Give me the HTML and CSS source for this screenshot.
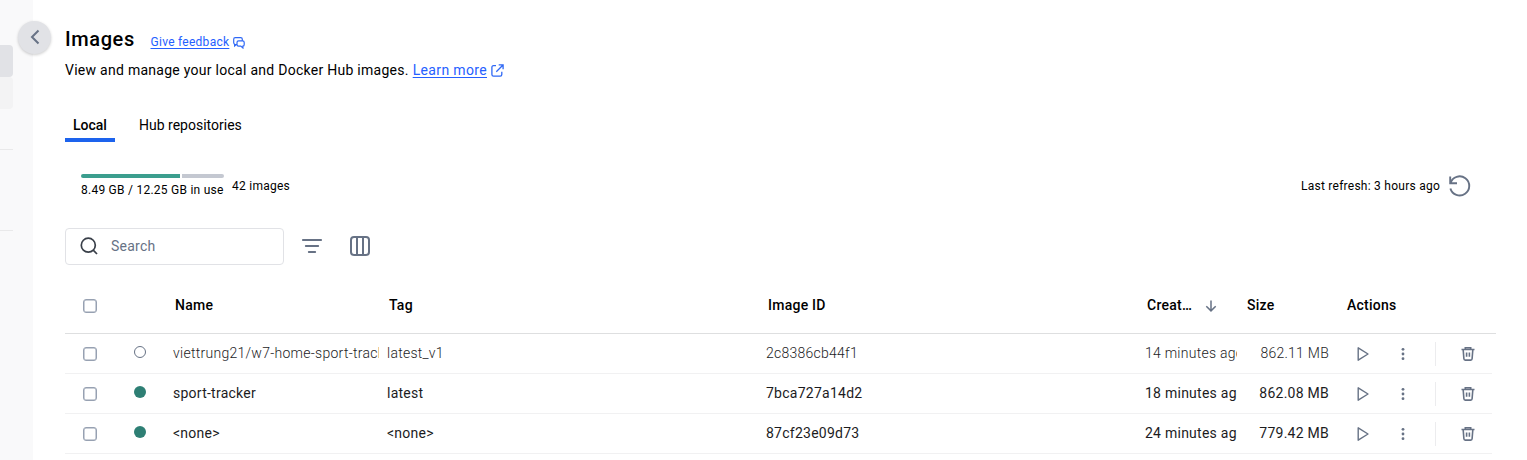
FILE: index.html
```html
<!DOCTYPE html>
<html lang="en">
<head>
<meta charset="utf-8">
<title>Images</title>
<link rel="stylesheet" href="styles.css">
</head>
<body>
<svg class="defs" width="0" height="0">
  <symbol id="play" viewBox="0 0 16 16"><path d="M3.200 1.800v12.400l9.800-6.200z" fill="none" stroke="currentColor" stroke-width="1.400" stroke-linejoin="round"/></symbol>
  <symbol id="dots" viewBox="0 0 16 16"><circle cx="8" cy="3.300" r="1.400"/><circle cx="8" cy="8" r="1.400"/><circle cx="8" cy="12.700" r="1.400"/></symbol>
  <symbol id="trash" viewBox="0 0 16 16"><path d="M1.500 3.500h13M5.300 3V1.800h5.400V3M3.200 4l.7 8.800q.1 1.300 1.300 1.300h5.600q1.200 0 1.300-1.300l.7-8.800M6.600 6.500v4.300M9.400 6.500v4.300" fill="none" stroke="currentColor" stroke-width="1.600"/></symbol>
</svg>
<div class="app">
  <aside class="sidebar">
    <div class="nav-item active"></div>
    <div class="nav-item hover"></div>
    <div class="nav-rule first"></div>
    <div class="nav-rule second"></div>
    <button class="collapse" aria-label="Collapse"><svg width="20" height="20" viewBox="0 0 20 20"><path d="M13.500 3.500 7 10l6.500 6.500" fill="none" stroke="currentColor" stroke-width="2"/></svg></button>
  </aside>
  <main class="main">
    <header class="title-row">
      <h1>Images</h1>
      <a class="feedback">Give feedback</a>
      <svg class="link-icon chat" width="12" height="12" viewBox="0 0 12 12"><path d="M3.500 7.500H2.300Q.7 7.300.7 5.800V2.300Q.7.700 2.300.7h5.400q1.600 0 1.600 1.600v1.200M1.600 7v2l2-1.600M5.600 3.900h4q1.600 0 1.600 1.600v1.900q0 1.600-1.300 1.700v1.900L7.800 9.100H5.600Q4 9.100 4 7.500v-2q0-1.600 1.600-1.600z" fill="none" stroke="currentColor" stroke-width="1.200"/></svg>
    </header>
    <p class="desc"><span>View and manage your local and Docker Hub images.</span><a>Learn more</a><svg class="link-icon" width="13" height="13" viewBox="0 0 13 13"><path d="M5 1.700H2.500Q.9 1.700.9 3.300v7.200q0 1.600 1.600 1.600h6.700q1.600 0 1.600-1.600V7.700M7.700.9h4.400v4.400M12 1 5.300 7.700" fill="none" stroke="currentColor" stroke-width="1.300"/></svg></p>
    <nav class="tabs"><div class="tab selected">Local</div><div class="tab">Hub repositories</div></nav>
    <section class="usage">
      <div class="disk">
        <div class="bar"><i class="used"></i><i class="free"></i></div>
        <div class="disk-text">8.49 GB / 12.25 GB in use</div>
      </div>
      <div class="count">42 images</div>
      <div class="refresh">Last refresh: 3 hours ago</div>
      <svg class="refresh-icon" width="24" height="24" viewBox="0 0 24 24"><path d="M2.200 2.500v6.700H9M2.500 9A9.600 9.600 0 1 1 2.400 14.500" fill="none" stroke="currentColor" stroke-width="1.900"/></svg>
    </section>
    <section class="toolbar">
      <div class="search"><svg width="18" height="18" viewBox="0 0 18 18"><circle cx="8.300" cy="8.200" r="7" fill="none" stroke="currentColor" stroke-width="1.700"/><path d="m13.200 13.200 3.800 3.800" stroke="currentColor" stroke-width="1.700"/></svg><span>Search</span></div>
      <svg class="tool filter" width="20" height="20" viewBox="0 0 20 20"><path d="M.8 4h18.400M3.800 10h12.400M6.800 16h6.400" fill="none" stroke="currentColor" stroke-width="1.900" stroke-linecap="round"/></svg>
      <svg class="tool" width="20" height="20" viewBox="0 0 20 20"><path d="M4 1h12q3 0 3 3v12q0 3-3 3H4q-3 0-3-3V4Q1 1 4 1zM7 1v18M13 1v18" fill="none" stroke="currentColor" stroke-width="2"/></svg>
    </section>
    <section class="table">
      <div class="row head">
        <div class="check"><i></i></div><div></div><div>Name</div><div>Tag</div><div>Image ID</div>
        <div class="created"><span>Creat…</span><svg width="12" height="12" viewBox="0 0 12 12"><path d="M6 .5v10.300M1.300 6.200 6 10.900l4.700-4.700" fill="none" stroke="currentColor" stroke-width="1.500"/></svg></div>
        <div>Size</div><div>Actions</div>
      </div>
      <div class="row body unused">
        <div class="check"><i></i></div><div class="status"><i></i></div><div>viettrung21/w7-home-sport-tracker</div><div>latest_v1</div><div>2c8386cb44f1</div><div>14 minutes ago</div><div class="size">862.11 MB</div>
        <div class="actions"><svg><use href="#play"/></svg><svg><use href="#dots"/></svg><b></b><svg><use href="#trash"/></svg></div>
      </div>
      <div class="row body">
        <div class="check"><i></i></div><div class="status"><i></i></div><div>sport-tracker</div><div>latest</div><div>7bca727a14d2</div><div>18 minutes ago</div><div class="size">862.08 MB</div>
        <div class="actions"><svg><use href="#play"/></svg><svg><use href="#dots"/></svg><b></b><svg><use href="#trash"/></svg></div>
      </div>
      <div class="row body">
        <div class="check"><i></i></div><div class="status"><i></i></div><div>&lt;none&gt;</div><div>&lt;none&gt;</div><div>87cf23e09d73</div><div>24 minutes ago</div><div class="size">779.42 MB</div>
        <div class="actions"><svg><use href="#play"/></svg><svg><use href="#dots"/></svg><b></b><svg><use href="#trash"/></svg></div>
      </div>
    </section>
  </main>
</div>
</body>
</html>
```

FILE: styles.css
```css
* { box-sizing: border-box; }
body { margin: 0; background: #fff; color: #000; font-family: Roboto, sans-serif; font-size: 14px; letter-spacing: 0.25px; overflow: hidden; }
.defs { position: absolute; }
.app { display: flex; height: 460px; }
.sidebar { position: relative; width: 33px; flex: none; background: #f9f9fa; padding-top: 45px; }
.nav-item { width: 13px; height: 32px; border-radius: 0 4px 4px 0; }
.nav-item.active { background: #e1e2e6; }
.nav-item.hover { background: #f3f3f4; }
.nav-rule { width: 13px; height: 1px; background: #e9e9ea; }
.nav-rule.first { margin-top: 40px; }
.nav-rule.second { margin-top: 80px; }
.collapse { position: absolute; left: 18px; top: 21px; width: 33px; height: 33px; padding: 0; border: 0; border-radius: 50%; background: #e1e2e6; color: #677285; display: grid; place-items: center; box-shadow: 0 1px 3px rgba(0,0,0,.2); }
.collapse svg { margin-top: -1px; }
.main { flex: 1; min-width: 0; padding: 24px 31px 0 32px; }
.title-row { display: flex; align-items: center; height: 30px; }
h1 { margin: 0; width: 85.500px; font-size: 20px; font-weight: 500; line-height: 30px; letter-spacing: 0.600px; }
a { color: #2560ff; text-decoration: underline; text-underline-offset: 2px; }
.feedback { font-size: 12px; margin-top: 6px; letter-spacing: 0.27px; }
.link-icon { color: #2f68f5; }
.chat { margin: 7px 0 0 4px; }
.desc { display: flex; align-items: center; margin: 6px 0 0; height: 20px; letter-spacing: 0.27px; }
.desc a { margin: 0 4px 0 4px; letter-spacing: 0.35px; }
.tabs { display: flex; margin-top: 28px; gap: 16px; }
.tab { height: 34px; padding: 8px 8px 0; line-height: 18px; letter-spacing: 0; }
.tab.selected { width: 50px; border-bottom: 4px solid #1d63ed; font-weight: 500; }
.usage { display: flex; align-items: center; height: 40px; margin-top: 24px; padding: 0 24px 0 16px; font-size: 12px; }
.disk { width: 143px; white-space: nowrap; }
.bar { display: flex; gap: 2px; height: 4px; }
.bar i { border-radius: 2px 0 0 2px; }
.used { width: 99px; background: #3b9e8e; }
.free { flex: 1; background: #c4c8d1; }
.bar .free { border-radius: 0 2px 2px 0; }
.disk-text { line-height: 16px; margin-top: 4px; }
.count { margin-left: 8px; }
.refresh { margin-left: auto; }
.refresh-icon { margin-left: 8px; color: #677285; }
.toolbar { display: flex; align-items: center; margin-top: 22px; height: 37px; color: #677285; }
.search { display: flex; align-items: center; width: 219px; height: 37px; padding: 0 0 2px 14px; gap: 13px; border: 1px solid #e1e2e6; border-radius: 4px; }
.search svg { color: #393f49; }
.tool { margin: 0 0 1px 28px; }
.tool.filter { margin-left: 18px; }
.table { margin-top: 12px; }
.row { display: grid; grid-template-columns: 50px 50px 214px 379px 379px 100px 100px 1fr; align-items: center; }
.row > div { padding-left: 8px; white-space: nowrap; overflow: hidden; }
.head { height: 57px; border-bottom: 1px solid #dedfe0; font-weight: 500; }
.head > div { padding-left: 10px; }
.body { height: 40px; width: 1427px; border-bottom: 1px solid #f1f1f2; color: #1c1c1e; }
.body > div { padding-bottom: 2px; }
.row > .check { display: flex; padding: 2px 0 0 18px; }
.body > .check { padding-top: 0; }
.check i { width: 14px; height: 14px; border: 1px solid #97a1b2; border-radius: 3px; box-shadow: inset 0 0 0 .5px #97a1b2; }
.head .created { display: flex; align-items: center; }
.created span { width: 58px; }
.created svg { color: #677285; margin-top: 2px; }
.row > .status { padding: 0 0 3px 19px; display: flex; }
.status i { width: 12px; height: 12px; border-radius: 50%; background: #2e7f74; }
.unused .status i { background: none; border: 1px solid #677285; }
.unused { font-weight: 300; }
.unused > div:nth-child(3) { letter-spacing: 0.27px; }
.row > .size { padding: 0 8px 2px 0; text-align: right; }
.row > .actions { display: flex; align-items: center; padding: 1px 0 0 18px; height: 30px; color: #677285; fill: currentColor; }
.actions svg { width: 16px; height: 16px; }
.actions svg:nth-of-type(2) { margin-left: 24px; }
.actions b { width: 1px; height: 24px; background: #ececee; margin: 0 24px; }
```
